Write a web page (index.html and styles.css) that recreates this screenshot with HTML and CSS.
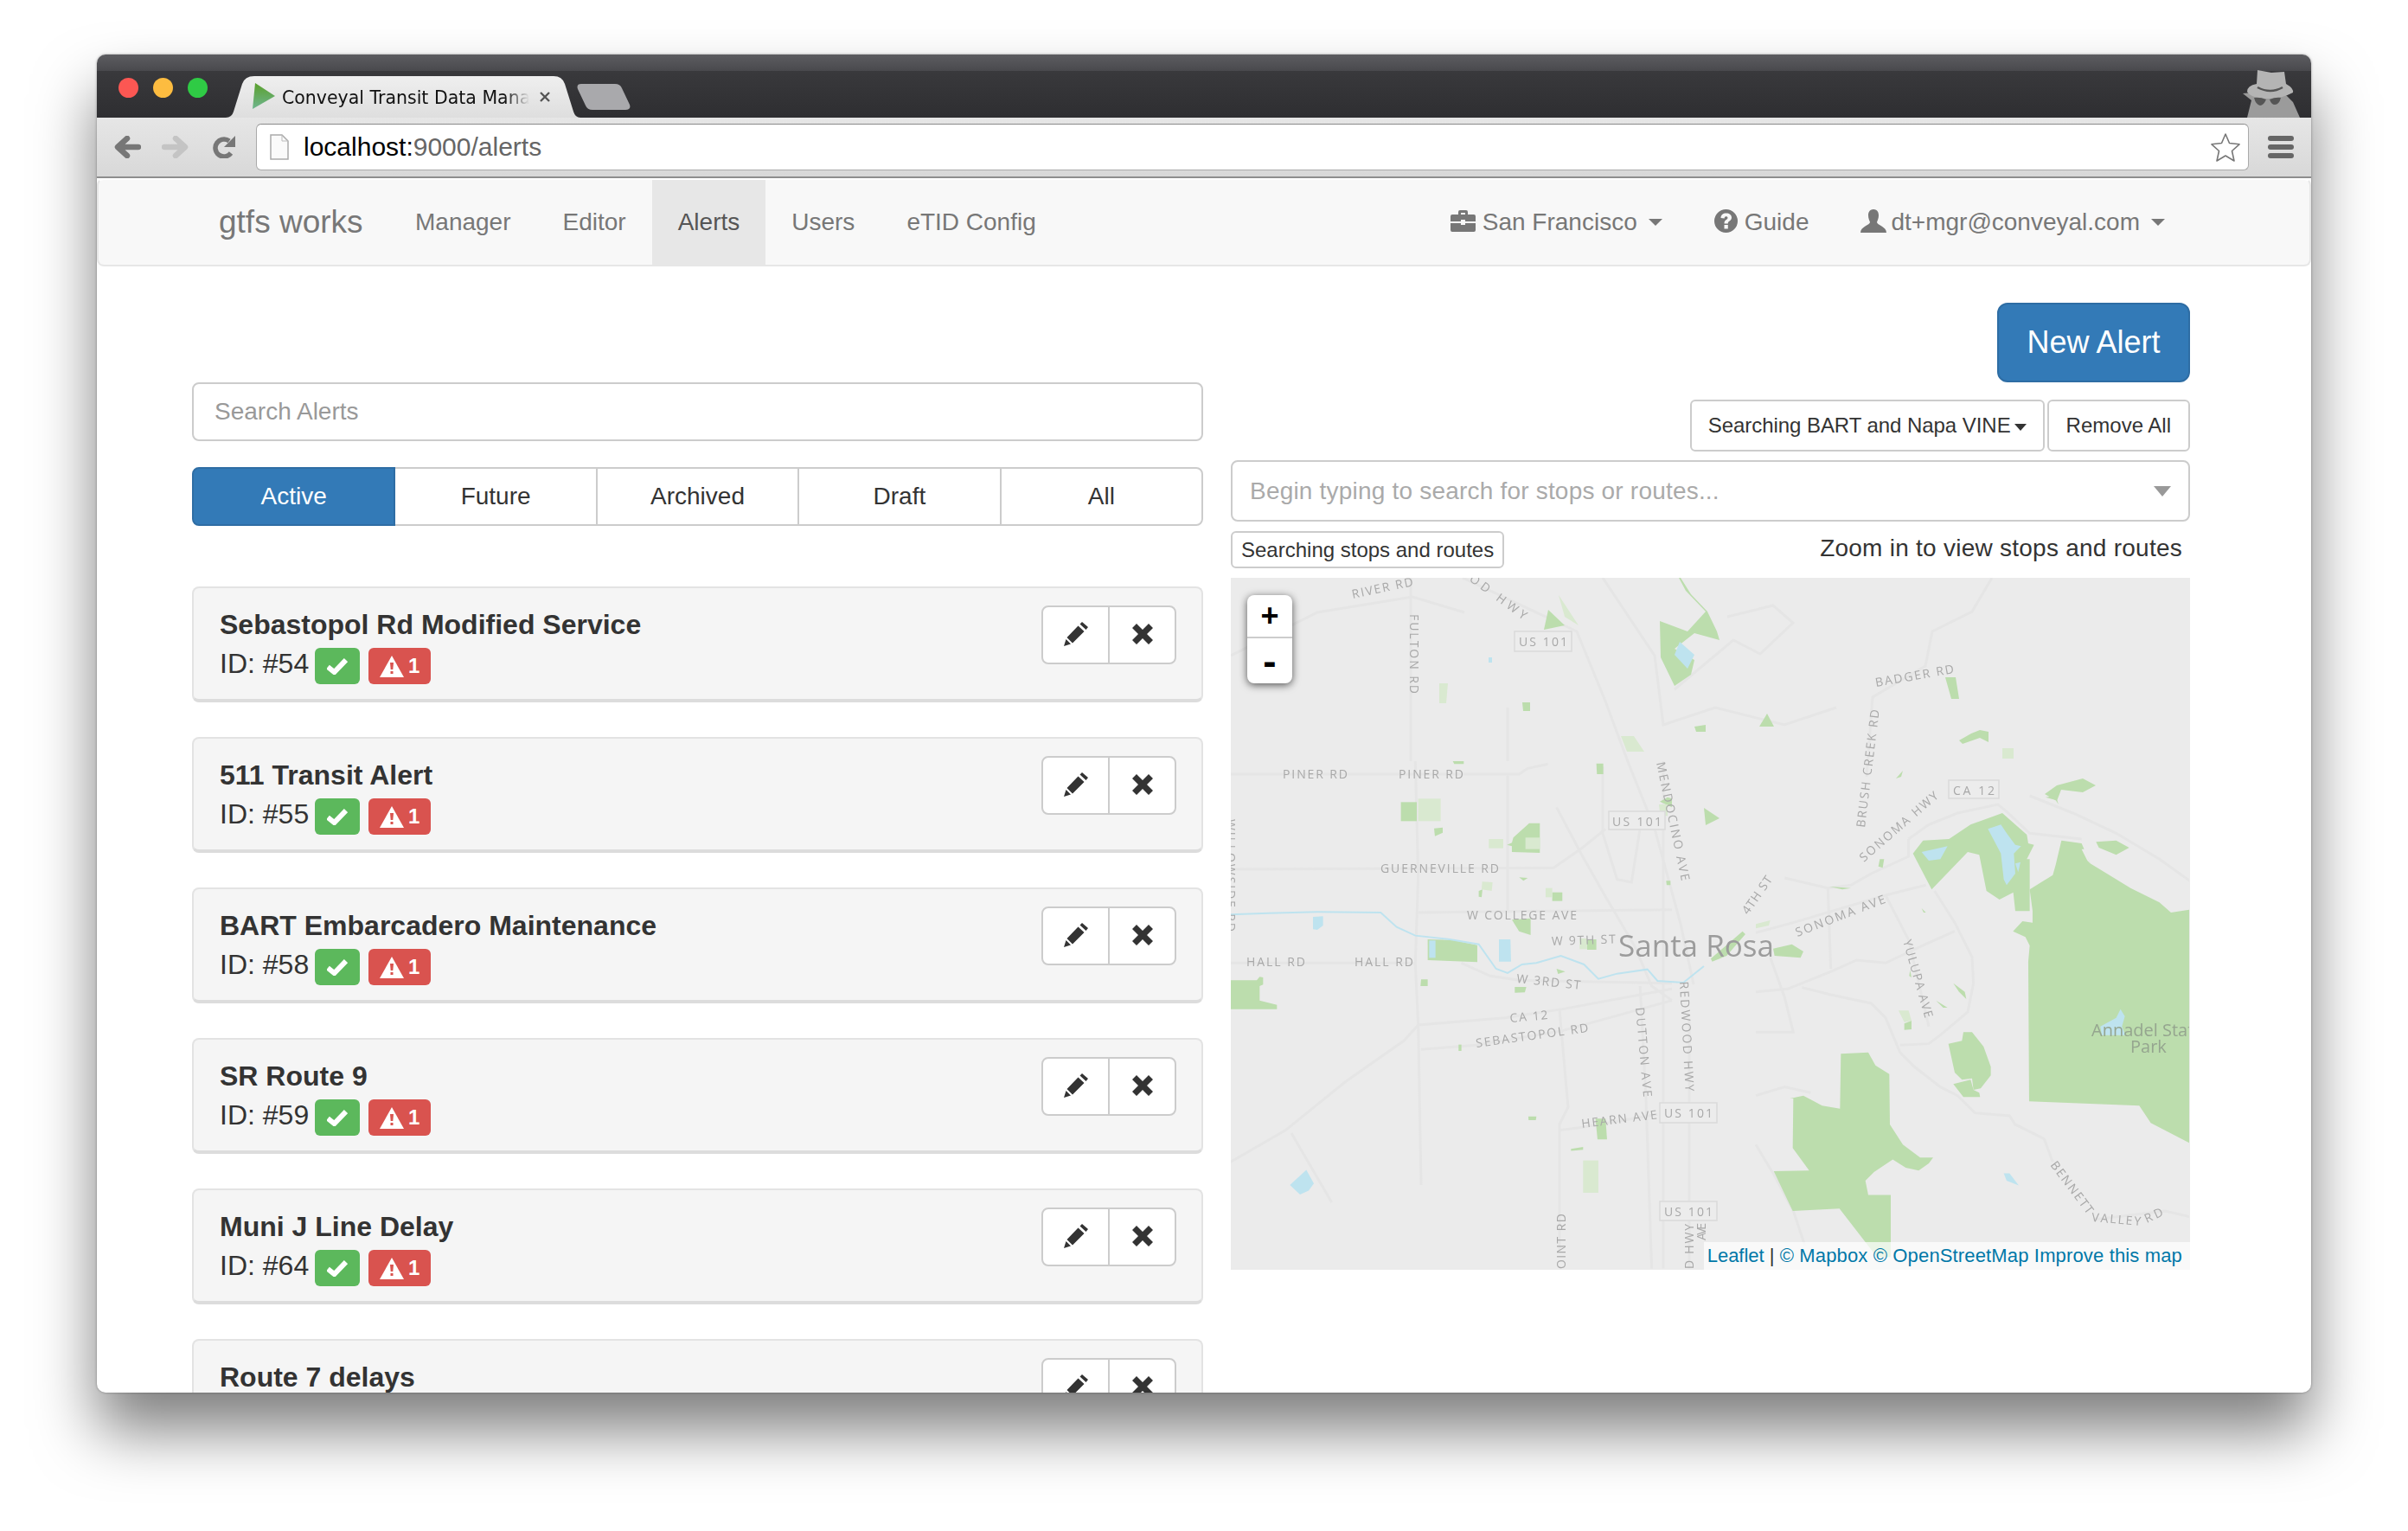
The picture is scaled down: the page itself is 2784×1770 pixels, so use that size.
FILE: index.html
```html
<!DOCTYPE html>
<html lang="en">
<head>
    <meta charset="UTF-8">
    <title>Conveyal Transit Data Manager</title>
    <link rel="stylesheet" href="styles.css">
</head>
<body>
    <svg class="defs" width="0" height="0">
        <symbol id="i-pencil" viewBox="0 0 28 28">
            <path d="M21 0L28 6L25.5 9L18.5 2.5Z M16.5 4.5L23.5 11L10 24.5L3.5 18Z M2.5 20L8 25.5L0 28Z"/>
        </symbol>
        <symbol id="i-remove" viewBox="0 0 24 24">
            <path d="M5 0L12 7L19 0L24 5L17 12L24 19L19 24L12 17L5 24L0 19L7 12L0 5Z"/>
        </symbol>
        <symbol id="i-check" viewBox="0 0 24 20">
            <path d="M1 11L8.5 17L22 3" fill="none" stroke="#fff" stroke-width="6"/>
        </symbol>
        <symbol id="i-warn" viewBox="0 0 28 25">
            <path d="M14 0L28 25L0 25Z" fill="#fff"/>
            <path d="M12 8H16L15.3 16H12.7Z M12.5 18H15.5V21H12.5Z" fill="#d9534f"/>
        </symbol>
    </svg>

    <div class="window">
        <!-- browser chrome -->
        <div class="titlebar">
            <div class="lights">
                <span class="light red"></span>
                <span class="light yellow"></span>
                <span class="light green"></span>
            </div>
            <div class="tab">
                <svg class="tab-shape" width="410" height="48" viewBox="0 0 410 48">
                    <defs>
                        <linearGradient id="tabfill" x1="0" y1="0" x2="0" y2="1">
                            <stop offset="0" stop-color="#efefef"/>
                            <stop offset="1" stop-color="#dedede"/>
                        </linearGradient>
                    </defs>
                    <path d="M0 48Q7 48 9 41L19 9Q22 0 33 0L379 0Q389 0 392 9L402 41Q404 48 410 48Z" fill="url(#tabfill)"/>
                </svg>
                <svg class="favicon" width="26" height="30" viewBox="0 0 26 30">
                    <defs>
                        <linearGradient id="favfill" x1="0" y1="0" x2="0" y2="1">
                            <stop offset="0" stop-color="#5aa02c"/>
                            <stop offset="1" stop-color="#6fb58f"/>
                        </linearGradient>
                    </defs>
                    <path d="M3 0L26 15L0 30Z" fill="url(#favfill)"/>
                </svg>
                <span class="tab-title">Conveyal Transit Data Manager</span>
                <svg class="tab-close" width="14" height="14" viewBox="0 0 14 14">
                    <path d="M2 2L12 12M12 2L2 12" stroke="#555" stroke-width="2.4"/>
                </svg>
            </div>
            <svg class="newtab" width="62" height="30" viewBox="0 0 62 30">
                <path d="M5 0L44 0Q50 0 52 5L61 24Q63 30 56 30L18 30Q12 30 10 25L1 6Q-1 0 5 0Z" fill="#a9a9ac"/>
            </svg>
            <svg class="spy" width="66" height="56" viewBox="0 0 66 56">
                <path d="M0 28L12 27Q30 38 48 28L58 38L66 56L5 56L10 36Z" fill="#9b9b9b"/>
                <path d="M17 1L33 4L48 3L50 17Q59 22 58 27Q45 34 30 34Q10 34 5 26Q5 19 16 17Z" fill="#b4b4b4"/>
                <path d="M13 33Q20 32 27 35Q24 42 20 42Q15 41 13 33ZM31 35Q38 32 44 33Q42 41 37 41Q33 41 31 35Z" fill="#555"/>
                <path d="M17 21Q32 29 46 21" fill="none" stroke="#555" stroke-width="2.5"/>
            </svg>
        </div>

        <div class="toolbar">
            <svg class="tool-back" width="31" height="26" viewBox="0 0 31 26">
                <path d="M28 13H5M15 3L4 13L15 23" fill="none" stroke="#777" stroke-width="6.5" stroke-linecap="round" stroke-linejoin="round"/>
            </svg>
            <svg class="tool-fwd" width="31" height="26" viewBox="0 0 31 26">
                <path d="M3 13H26M16 3L27 13L16 23" fill="none" stroke="#c4c4c4" stroke-width="6.5" stroke-linecap="round" stroke-linejoin="round"/>
            </svg>
            <svg class="tool-reload" width="28" height="26" viewBox="0 0 28 26">
                <path d="M22 20A10 10 0 1 1 20 6" fill="none" stroke="#777" stroke-width="5.5"/>
                <path d="M27 0V13H14Z" fill="#777"/>
            </svg>
            <div class="urlbar">
                <svg class="page-icon" width="22" height="30" viewBox="0 0 22 30">
                    <path d="M1 1H14L21 8V29H1Z" fill="#fafafa" stroke="#aaa" stroke-width="1.5"/>
                    <path d="M14 1V8H21" fill="none" stroke="#bbb" stroke-width="1"/>
                </svg>
                <span class="url-host">localhost:</span><span class="url-path">9000/alerts</span>
                <svg class="star" width="36" height="35" viewBox="0 0 36 35">
                    <path d="M18 2L22.5 12.5L34 13.8L25.5 21.5L28 33L18 27L8 33L10.5 21.5L2 13.8L13.5 12.5Z" fill="#fff" stroke="#777" stroke-width="1.6" stroke-linejoin="round"/>
                </svg>
            </div>
            <div class="menu-icon"><span></span><span></span><span></span></div>
        </div>

        <!-- app navbar -->
        <nav class="navbar">
            <a class="brand">gtfs works</a>
            <ul class="nav">
                <li>Manager</li>
                <li>Editor</li>
                <li class="active">Alerts</li>
                <li>Users</li>
                <li>eTID Config</li>
            </ul>
            <ul class="nav nav-right">
                <li>
                    <svg class="nav-icon" width="29" height="25" viewBox="0 0 29 25">
                        <path d="M9 5V2Q9 0 11 0H18Q20 0 20 2V5H17V3H12V5Z M0 7Q0 5 2 5H27Q29 5 29 7V13H17V11H12V13H0Z M0 15H12V17H17V15H29V23Q29 25 27 25H2Q0 25 0 23Z"/>
                    </svg>
                    San Francisco<span class="caret"></span>
                </li>
                <li>
                    <svg class="nav-icon" width="27" height="27" viewBox="0 0 27 27">
                        <path fill-rule="evenodd" d="M13.5 0A13.5 13.5 0 1 0 13.5 27A13.5 13.5 0 1 0 13.5 0Z M7.5 10C7.5 6.500 10 4.500 13.700 4.500C17.500 4.500 20 6.500 20 9.500C20 12 18.500 13 17 14C16 14.700 15.800 15.200 15.800 16.500H11.500C11.500 14 12.300 13 13.800 12C15 11.200 15.500 10.700 15.500 9.800C15.500 8.800 14.800 8.200 13.600 8.200C12.400 8.200 11.700 9 11.700 10.500Z M11.500 18H15.800V22.500H11.500Z"/>
                    </svg>
                    Guide
                </li>
                <li>
                    <svg class="nav-icon nav-icon-user" width="30" height="27" viewBox="0 0 30 27">
                        <path d="M15 0C20 0 21 4 21 7C21 11 19.500 13 19 15C19 18 30 20 30 27H0C0 20 11 18 11 15C10.500 13 9 11 9 7C9 4 10 0 15 0Z"/>
                    </svg>
                    dt+mgr@conveyal.com<span class="caret"></span>
                </li>
            </ul>
        </nav>

        <main class="page">
            <section class="col-left">
                <div class="search-box">Search Alerts</div>
                <div class="tabs">
                    <div class="tab-btn active">Active</div>
                    <div class="tab-btn">Future</div>
                    <div class="tab-btn">Archived</div>
                    <div class="tab-btn">Draft</div>
                    <div class="tab-btn">All</div>
                </div>

                <div class="alert-list">
                    <div class="alert-card">
                        <div class="alert-info">
                            <div class="alert-title">Sebastopol Rd Modified Service</div>
                            <div class="alert-meta">
                                <span class="alert-id">ID: #54</span>
                                <span class="badge ok"><svg width="24" height="20"><use href="#i-check"/></svg></span>
                                <span class="badge bad"><svg width="28" height="25"><use href="#i-warn"/></svg>1</span>
                            </div>
                        </div>
                        <div class="btn-pair">
                            <button><svg class="ic-pencil"><use href="#i-pencil"/></svg></button>
                            <button><svg class="ic-remove"><use href="#i-remove"/></svg></button>
                        </div>
                    </div>
                    <div class="alert-card">
                        <div class="alert-info">
                            <div class="alert-title">511 Transit Alert</div>
                            <div class="alert-meta">
                                <span class="alert-id">ID: #55</span>
                                <span class="badge ok"><svg width="24" height="20"><use href="#i-check"/></svg></span>
                                <span class="badge bad"><svg width="28" height="25"><use href="#i-warn"/></svg>1</span>
                            </div>
                        </div>
                        <div class="btn-pair">
                            <button><svg class="ic-pencil"><use href="#i-pencil"/></svg></button>
                            <button><svg class="ic-remove"><use href="#i-remove"/></svg></button>
                        </div>
                    </div>
                    <div class="alert-card">
                        <div class="alert-info">
                            <div class="alert-title">BART Embarcadero Maintenance</div>
                            <div class="alert-meta">
                                <span class="alert-id">ID: #58</span>
                                <span class="badge ok"><svg width="24" height="20"><use href="#i-check"/></svg></span>
                                <span class="badge bad"><svg width="28" height="25"><use href="#i-warn"/></svg>1</span>
                            </div>
                        </div>
                        <div class="btn-pair">
                            <button><svg class="ic-pencil"><use href="#i-pencil"/></svg></button>
                            <button><svg class="ic-remove"><use href="#i-remove"/></svg></button>
                        </div>
                    </div>
                    <div class="alert-card">
                        <div class="alert-info">
                            <div class="alert-title">SR Route 9</div>
                            <div class="alert-meta">
                                <span class="alert-id">ID: #59</span>
                                <span class="badge ok"><svg width="24" height="20"><use href="#i-check"/></svg></span>
                                <span class="badge bad"><svg width="28" height="25"><use href="#i-warn"/></svg>1</span>
                            </div>
                        </div>
                        <div class="btn-pair">
                            <button><svg class="ic-pencil"><use href="#i-pencil"/></svg></button>
                            <button><svg class="ic-remove"><use href="#i-remove"/></svg></button>
                        </div>
                    </div>
                    <div class="alert-card">
                        <div class="alert-info">
                            <div class="alert-title">Muni J Line Delay</div>
                            <div class="alert-meta">
                                <span class="alert-id">ID: #64</span>
                                <span class="badge ok"><svg width="24" height="20"><use href="#i-check"/></svg></span>
                                <span class="badge bad"><svg width="28" height="25"><use href="#i-warn"/></svg>1</span>
                            </div>
                        </div>
                        <div class="btn-pair">
                            <button><svg class="ic-pencil"><use href="#i-pencil"/></svg></button>
                            <button><svg class="ic-remove"><use href="#i-remove"/></svg></button>
                        </div>
                    </div>
                    <div class="alert-card">
                        <div class="alert-info">
                            <div class="alert-title">Route 7 delays</div>
                        </div>
                        <div class="btn-pair">
                            <button><svg class="ic-pencil"><use href="#i-pencil"/></svg></button>
                            <button><svg class="ic-remove"><use href="#i-remove"/></svg></button>
                        </div>
                    </div>
                </div>
            </section>

            <section class="col-right">
                <div class="row-end">
                    <button class="btn-new">New Alert</button>
                </div>
                <div class="row-end filter-row">
                    <button class="btn-sm btn-agency">Searching BART and Napa VINE<span class="caret dark"></span></button>
                    <button class="btn-sm">Remove All</button>
                </div>
                <div class="stop-select">
                    <span>Begin typing to search for stops or routes...</span>
                    <span class="select-arrow"></span>
                </div>
                <div class="map-head">
                    <button class="btn-xs">Searching stops and routes</button>
                    <span class="zoom-hint">Zoom in to view stops and routes</span>
                </div>

                <div class="map">
                    <svg class="map-art" width="1108" height="800" viewBox="0 0 1108 800">
                        <!-- roads, top part -->
                        <g class="roads">
                            <polyline points="268,0 400,62 432,140 460,215 490,290 520,400 535,470"/>
                            <polyline points="574,45 627,32 650,52 612,88 581,72 513,129"/>
                            <polyline points="880,0 857,39 811,62 803,102 742,138 735,230"/>
                            <polyline points="0,90 100,40 210,22 270,40"/>
                            <polyline points="208,0 208,212"/>
                            <polyline points="320,150 320,212"/>
                            <polyline points="430,0 490,90 500,170 560,150 640,170 700,150"/>
                        </g>
                        <!-- west half -->
                        <g transform="translate(0,212) scale(.3333)">
                            <g class="roads thick">
                                <polyline points="0,45 1000,45 1030,25 1100,10"/>
                                <polyline points="0,375 1120,370 1220,300 1300,235"/>
                                <polyline points="650,525 1530,515"/>
                                <polyline points="0,700 640,700"/>
                                <polyline points="800,700 900,745 1000,760 1530,770"/>
                                <polyline points="640,0 650,400 640,700 650,910 660,1470"/>
                                <polyline points="960,50 960,520"/>
                                <polyline points="0,1390 190,1280 400,1110 600,970 650,915 950,890 1150,860 1530,790"/>
                                <polyline points="660,1000 850,985 1150,935 1530,830"/>
                                <polyline points="1130,160 1220,330 1300,470 1400,640 1460,780 1530,830"/>
                                <polyline points="1140,860 1170,1200 1140,1260 1140,1700"/>
                                <polyline points="1140,1280 1220,1270 1480,1225"/>
                                <polyline points="1290,20 1290,250 1340,410 1390,420 1420,230"/>
                                <polyline points="1420,780 1440,1170 1460,1760"/>
                                <polyline points="1500,0 1500,1760"/>
                                <polyline points="1590,900 1590,1760"/>
                                <polyline points="210,1290 350,1530"/>
                            </g>
                            <g class="green">
                                <polygon points="590,142 645,142 645,208 590,208"/>
                                <polygon points="705,233 735,230 735,248 708,260"/>
                                <polygon points="770,0 808,0 808,10 775,10"/>
                                <polygon points="1268,8 1292,8 1292,45 1270,45"/>
                                <polygon points="980,265 1035,215 1072,215 1072,318 975,315 975,295 958,290 975,283"/>
                                <polygon points="1000,403 1030,405 1015,415"/>
                                <polygon points="860,450 873,445 870,472 860,470"/>
                                <polygon points="1115,455 1150,455 1150,485 1115,485"/>
                                <polygon points="975,550 1040,545 1040,603 1000,590"/>
                                <polygon points="1236,618 1268,618 1268,654 1236,654"/>
                                <polygon points="683,618 770,620 855,638 855,697 683,690"/>
                                <polygon points="660,757 683,757 683,780 658,780"/>
                                <polygon points="0,760 90,760 100,748 112,750 112,775 100,780 100,830 160,845 160,860 0,860"/>
                                <polygon points="985,783 1025,783 1020,802 985,803"/>
                                <polygon points="1130,720 1160,730 1135,738"/>
                                <polygon points="790,983 800,983 800,1005 790,1005"/>
                                <polygon points="1032,1232 1060,1232 1058,1245 1033,1245"/>
                                <polygon points="1265,1240 1300,1240 1305,1312 1272,1312"/>
                                <polygon points="1180,1345 1222,1338 1222,1348 1180,1352"/>
                                <polygon points="1488,140 1515,125 1530,130 1530,160"/>
                                <polygon points="1510,415 1525,415 1525,430 1512,430"/>
                                <polygon points="1665,685 1700,655 1775,590 1785,600 1720,675 1670,695"/>
                            </g>
                            <g class="green-light">
                                <polygon points="650,130 728,130 728,208 650,208"/>
                                <polygon points="1022,265 1072,265 1072,305 1022,305"/>
                                <polygon points="895,270 945,270 945,302 895,302"/>
                                <polygon points="872,418 908,420 905,450 870,445"/>
                                <polygon points="1092,440 1115,440 1115,472 1092,472"/>
                                <polygon points="1210,615 1236,615 1236,652 1210,652"/>
                                <polygon points="1222,1385 1275,1385 1275,1497 1222,1497"/>
                                <polygon points="1485,150 1515,150 1515,190 1490,190"/>
                            </g>
                            <g class="water">
                                <polygon points="688,622 710,622 710,682 688,682"/>
                                <polygon points="930,618 970,618 972,695 930,695"/>
                                <polygon points="285,540 320,538 320,570 300,585 285,583"/>
                                <polygon points="205,1470 262,1418 288,1465 270,1490 240,1503"/>
                            </g>
                            <polyline class="river" points="0,532 130,527 300,523 520,525 575,575 640,605 760,618 860,635 920,720 960,735 1010,705 1060,700 1145,675 1225,705 1275,755 1340,737 1445,722 1480,762 1570,768 1641,711"/>
                        </g>
                        <!-- east half -->
                        <g transform="translate(607,252) scale(.3333)">
                            <g class="roads thick">
                                <polyline points="0,475 130,440 450,345 590,310"/>
                                <polyline points="0,680 110,670 260,610 350,570 450,580 600,510 690,470"/>
                                <polyline points="620,330 690,440 750,560 755,650 735,750 640,830 600,860 500,865"/>
                                <polyline points="160,665 260,690 400,720 450,770 500,890 550,940 640,1010 700,1040 760,1100 880,1110 900,1140 1000,1190 1030,1270"/>
                                <polyline points="0,1210 60,1310 130,1440 170,1560"/>
                                <polyline points="530,150 600,100 700,60 840,30 870,55 950,130 1130,150"/>
                                <polyline points="950,0 1100,60 1250,130 1400,220 1505,295"/>
                                <polyline points="0,1040 100,1010 190,1030"/>
                                <polyline points="100,285 250,320 330,310 400,270 530,210 530,150"/>
                                <polyline points="250,320 260,600"/>
                                <polyline points="450,345 530,500 600,800"/>
                                <polyline points="1170,1470 1420,1440 1505,1460"/>
                                <polyline points="0,820 130,820 100,700 50,560"/>
                            </g>
                            <g class="green">
                                <polygon points="1060,155 1130,165 1160,235 1300,320 1400,370 1440,405 1505,395 1505,1205 1370,1135 1330,1075 948,1060 945,575 950,520 935,490 892,470 925,435 960,440 960,400 950,325 1030,275 1040,240"/>
                                <polygon points="545,200 580,155 670,150 745,100 855,60 940,135 945,165 965,170 940,220 950,220 950,400 900,400 893,335 845,360 800,330 775,205 735,195 610,325"/>
                                <polygon points="1180,160 1250,155 1295,180 1250,205 1190,180"/>
                                <polygon points="668,860 715,850 720,820 750,820 790,870 815,940 815,970 780,1015 755,1020 750,980 715,985 690,960"/>
                                <polygon points="685,1000 745,985 755,1020 775,1030 778,1045 720,1045"/>
                                <polygon points="295,895 390,890 415,935 463,965 465,1140 510,1210 570,1255 615,1255 600,1275 565,1300 520,1290 475,1262 410,1305 380,1335 390,1385 468,1385 468,1600 420,1600 290,1432 128,1440 62,1302 185,1300 128,1222 130,1050 118,1050 165,1040 230,1075 292,1085"/>
                                <polygon points="60,530 125,515 165,540 155,562 65,555"/>
                                <polygon points="430,220 445,220 440,250 425,245"/>
                                <polygon points="255,315 330,320 300,325"/>
                                <polygon points="575,390 590,405 582,405"/>
                                <polygon points="535,605 540,630 532,625"/>
                                <polygon points="685,650 725,680 730,705 705,680"/>
                                <polygon points="625,710 665,735 650,735"/>
                                <polygon points="515,790 540,780 540,810 515,812"/>
                                <polygon points="1005,5 1040,0 1050,30 1040,15"/>
                            </g>
                            <g class="green-light">
                                <polygon points="495,745 530,745 540,780 515,785"/>
                                <polygon points="0,445 50,432 45,450 0,460"/>
                            </g>
                            <polygon class="white-cut" points="1130,185 1142,185 1160,235 1150,225"/>
                            <g class="water">
                                <polygon points="805,115 850,100 870,130 900,170 920,175 895,200 900,270 870,310 860,290 850,200"/>
                                <polygon points="900,235 918,230 910,265"/>
                                <polygon points="575,195 665,175 640,220 600,225"/>
                                <polygon points="860,1310 880,1310 912,1352 870,1335"/>
                                <polygon points="1195,800 1250,770 1265,740 1280,765 1270,800 1282,830 1200,830"/>
                            </g>
                        </g>
                        <!-- north greens -->
                        <g class="green">
                            <polygon points="520,0 532,19 551,39 562,62 565,72 536,64 513,82 536,95 532,112 513,125 497,92 496,50 528,62 549,39 526,15 518,0"/>
                            <polygon points="367,37 386,55 362,60"/>
                            <polygon points="826,115 838,115 842,140 833,140"/>
                            <polygon points="337,144 346,144 346,154 338,154"/>
                            <polygon points="611,172 620,157 628,172"/>
                            <polygon points="536,172 549,170 549,178 538,178"/>
                            <polygon points="842,188 856,180 866,176 876,178 876,190 866,185 846,192"/>
                            <polygon points="769,232 777,223 775,230"/>
                            <polygon points="547,266 565,278 549,286"/>
                            <polygon points="941,250 955,240 985,232 1000,240 985,248 960,245 955,258"/>
                        </g>
                        <g class="green-light">
                            <polygon points="379,20 402,55 386,45"/>
                            <polygon points="241,122 251,122 249,145 241,145"/>
                            <polygon points="451,183 466,183 478,201 458,201"/>
                            <polygon points="892,197 905,197 905,209 892,209"/>
                        </g>
                        <g class="water">
                            <polygon points="519,74 536,89 528,105 513,89"/>
                            <polygon points="298,92 302,92 302,98 298,98"/>
                        </g>

                        <!-- highway shields -->
                        <g class="shield">
                            <rect x="328" y="62" width="66" height="23"/>
                            <rect x="437" y="270" width="65" height="21"/>
                            <rect x="830" y="234" width="58" height="21"/>
                            <rect x="496" y="607" width="66" height="23"/>
                            <rect x="496" y="721" width="66" height="22"/>
                        </g>
                        <g class="lbl">
                            <text x="333" y="79" textLength="56">US 101</text>
                            <text x="441" y="287" textLength="57">US 101</text>
                            <text x="835" y="251" textLength="48">CA 12</text>
                            <text x="501" y="624" textLength="56">US 101</text>
                            <text x="501" y="738" textLength="56">US 101</text>
                            <text transform="translate(141,24) rotate(-12)" textLength="72">RIVER RD</text>
                            <text transform="translate(275,3) rotate(36)" textLength="78">OD HWY</text>
                            <text transform="translate(207,42) rotate(90)" textLength="92">FULTON RD</text>
                            <text transform="translate(746,126) rotate(-10)" textLength="92">BADGER RD</text>
                            <text x="60" y="232" textLength="75">PINER RD</text>
                            <text x="194" y="232" textLength="75">PINER RD</text>
                            <text x="173" y="341" textLength="137">GUERNEVILLE RD</text>
                            <text x="273" y="395" textLength="127">W COLLEGE AVE</text>
                            <text transform="translate(371,425) rotate(-2)" textLength="74">W 9TH ST</text>
                            <text x="18" y="449" textLength="68">HALL RD</text>
                            <text x="143" y="449" textLength="68">HALL RD</text>
                            <text transform="translate(330,468) rotate(6)" textLength="74">W 3RD ST</text>
                            <text transform="translate(323,514) rotate(-5)" textLength="44">CA 12</text>
                            <text transform="translate(284,543) rotate(-8)" textLength="131">SEBASTOPOL RD</text>
                            <text transform="translate(468,497) rotate(85)" textLength="104">DUTTON AVE</text>
                            <text transform="translate(406,636) rotate(-7)" textLength="88">HEARN AVE</text>
                            <text transform="translate(-5,279) rotate(90)" textLength="130">WILLOWSIDE RD</text>
                            <text transform="translate(492,214) rotate(78)" textLength="140">MENDOCINO AVE</text>
                            <text transform="translate(733,289) rotate(-83)" textLength="137">BRUSH CREEK RD</text>
                            <text transform="translate(732,329) rotate(-41)" textLength="115">SONOMA HWY</text>
                            <text transform="translate(598,390) rotate(-55)" textLength="50">4TH ST</text>
                            <text transform="translate(655,415) rotate(-21)" textLength="110">SONOMA AVE</text>
                            <text transform="translate(777,420) rotate(74)" textLength="93">YULUPA AVE</text>
                            <text transform="translate(519,467) rotate(87)" textLength="127">REDWOOD HWY</text>
                            <text transform="translate(947,679) rotate(53)" textLength="72">BENNETT</text>
                            <text transform="translate(995,744) rotate(5)" textLength="57">VALLEY</text>
                            <text transform="translate(1059,746) rotate(-25)" textLength="22">RD</text>
                            <text transform="translate(535,799) rotate(-90)" textLength="52">D HWY</text>
                            <text transform="translate(549,766) rotate(-90)" textLength="20">AVE</text>
                            <text transform="translate(387,799) rotate(-90)" textLength="64">OINT RD</text>
                        </g>
                        <text class="city" x="448" y="438" textLength="180" lengthAdjust="spacingAndGlyphs">Santa Rosa</text>
                        <text class="park-name" x="995" y="530">Annadel State</text>
                        <text class="park-name" x="1040" y="549">Park</text>
                    </svg>

                    <div class="zoom-ctl">
                        <div class="zoom-btn zoom-in">+</div>
                        <div class="zoom-btn zoom-out">-</div>
                    </div>
                    <div class="attribution"><a>Leaflet</a> | <a class="attr-wide">© Mapbox © OpenStreetMap Improve this map</a></div>
                </div>
            </section>
        </main>
    </div>
</body>
</html>
```

FILE: styles.css
```css
* {
    box-sizing: border-box;
}
html, body {
    margin: 0;
    height: 1770px;
    overflow: hidden;
}
body {
    padding: 63px 0 0 112px;
    background: #fff;
    font-family: "Liberation Sans", Arial, sans-serif;
    font-size: 28px;
    color: #333;
}
.defs {
    position: absolute;
}
.window {
    width: 2560px;
    height: 1547px;
    border-radius: 10px;
    overflow: hidden;
    background: #fff;
    display: flex;
    flex-direction: column;
    box-shadow: 0 44px 70px rgba(0, 0, 0, 0.5), 0 0 3px rgba(0, 0, 0, 0.35);
}

/* browser chrome */
.titlebar {
    height: 73px;
    flex: none;
    position: relative;
    display: flex;
    align-items: flex-end;
    background: linear-gradient(#5d5d61 0, #49494d 19px, #39393c 19px, #2e2e31 100%);
}
.lights {
    display: flex;
    gap: 17px;
    align-self: flex-start;
    margin: 27px 0 0 25px;
}
.light {
    width: 23px;
    height: 23px;
    border-radius: 50%;
}
.light.red { background: #fc5753; }
.light.yellow { background: #fdbc40; }
.light.green { background: #2fcb45; }
.tab {
    position: relative;
    width: 410px;
    height: 48px;
    margin-left: 21px;
    display: flex;
    align-items: center;
    padding-left: 31px;
}
.tab-shape {
    position: absolute;
    left: 0;
    top: 0;
}
.favicon {
    position: relative;
    flex: none;
    margin-top: -2px;
}
.tab-title {
    position: relative;
    margin-left: 8px;
    width: 286px;
    padding-top: 2px;
    overflow: hidden;
    white-space: nowrap;
    font-family: "DejaVu Sans", sans-serif;
    font-size: 20.5px;
    color: #111;
    -webkit-mask-image: linear-gradient(to right, #000 90%, transparent 100%);
    mask-image: linear-gradient(to right, #000 90%, transparent 100%);
}
.tab-close {
    position: relative;
    margin-left: 11px;
    flex: none;
}
.newtab {
    margin: 0 0 9px -4px;
    flex: none;
}
.spy {
    margin-left: auto;
    margin-right: 13px;
    flex: none;
}
.toolbar {
    height: 70px;
    flex: none;
    display: flex;
    align-items: center;
    padding: 0 20px;
    background: linear-gradient(#e6e6e6, #d8d8d8);
    border-bottom: 2px solid #8e8e8e;
}
.tool-fwd { margin-left: 24px; }
.tool-reload { margin-left: 27px; }
.urlbar {
    width: 2304px;
    height: 54px;
    margin-left: 23px;
    display: flex;
    align-items: center;
    padding: 0 8px 0 15px;
    background: #fff;
    border: 1px solid #aaa;
    border-top-color: #8a8a8a;
    border-radius: 6px;
    font-size: 30px;
}
.page-icon {
    margin-right: 17px;
    flex: none;
}
.url-host { color: #000; }
.url-path { color: #666; }
.star {
    margin-left: auto;
}
.menu-icon {
    margin-left: 22px;
    display: flex;
    flex-direction: column;
    gap: 4px;
}
.menu-icon span {
    width: 30px;
    height: 6px;
    border-radius: 3px;
    background: #666;
}

/* app navbar */
.navbar {
    height: 102px;
    flex: none;
    display: flex;
    align-items: stretch;
    padding-left: 139px;
    padding-right: 137px;
    background: #f8f8f8;
    border: 2px solid #e7e7e7;
    border-top-color: #fff;
    border-radius: 8px;
    color: #777;
}
.brand {
    font-size: 37px;
    align-self: center;
    width: 197px;
    white-space: nowrap;
}
.nav {
    display: flex;
    margin: 0;
    padding: 0;
    list-style: none;
}
.nav li {
    display: flex;
    align-items: center;
    padding: 0 30px;
    white-space: nowrap;
}
.nav li.active {
    background: #e7e7e7;
    color: #555;
}
.nav-right {
    margin-left: auto;
}
.nav-icon {
    fill: #777;
    margin-right: 8px;
    margin-top: -4px;
    flex: none;
}
.nav-icon-user {
    margin-right: 5px;
}
.caret {
    display: inline-block;
    margin-left: 13px;
    border-top: 8px solid #777;
    border-left: 8px solid transparent;
    border-right: 8px solid transparent;
}
.caret.dark {
    margin-left: 4px;
    border-top-color: #333;
    border-width: 8px 7px 0;
    vertical-align: 2px;
}

/* page */
.page {
    flex: 1;
    min-height: 0;
    display: flex;
    gap: 32px;
    padding: 42px 140px 0 110px;
    overflow: hidden;
}
.col-left {
    width: 1169px;
    flex: none;
    padding-top: 92px;
}
.col-right {
    width: 1109px;
    flex: none;
}
.search-box {
    height: 68px;
    padding: 0 24px;
    display: flex;
    align-items: center;
    color: #999;
    border: 2px solid #ccc;
    border-radius: 8px;
}
.tabs {
    display: flex;
    margin-top: 30px;
    height: 68px;
}
.tab-btn {
    flex: 1;
    margin-left: -2px;
    display: flex;
    align-items: center;
    justify-content: center;
    background: #fff;
    border: 2px solid #ccc;
}
.tab-btn:first-child {
    margin-left: 0;
    border-radius: 8px 0 0 8px;
}
.tab-btn:last-child {
    border-radius: 0 8px 8px 0;
}
.tab-btn.active {
    position: relative;
    color: #fff;
    background: #337ab7;
    border-color: #2e6da4;
}
.alert-list {
    margin-top: 70px;
    display: flex;
    flex-direction: column;
    gap: 40px;
}
.alert-card {
    height: 134px;
    flex: none;
    display: flex;
    justify-content: space-between;
    padding: 20px 29px 16px 30px;
    background: #f5f5f5;
    border: 2px solid #e3e3e3;
    border-bottom-width: 4px;
    border-bottom-color: #dcdcdc;
    border-radius: 8px;
}
.alert-title {
    margin-top: 3px;
    font-size: 32px;
    line-height: 38px;
    font-weight: bold;
}
.alert-meta {
    display: flex;
    align-items: flex-start;
    margin-top: 8px;
}
.alert-id {
    font-size: 32px;
    line-height: 34px;
    margin: 1px 7px 0 0;
}
.badge {
    height: 42px;
    display: flex;
    align-items: center;
    justify-content: center;
    border-radius: 6px;
    color: #fff;
    font-size: 24px;
    font-weight: bold;
}
.badge.ok {
    width: 52px;
    background: #5cb85c;
}
.badge.bad {
    width: 72px;
    margin-left: 10px;
    gap: 5px;
    background: #d9534f;
}
.btn-pair {
    display: flex;
    height: 68px;
    flex: none;
}
.btn-pair button {
    width: 79px;
    display: flex;
    align-items: center;
    justify-content: center;
    padding: 0 0 3px;
    background: #fff;
    border: 2px solid #ccc;
    border-radius: 8px 0 0 8px;
}
.btn-pair button + button {
    margin-left: -2px;
    border-radius: 0 8px 8px 0;
}
.ic-pencil {
    width: 28px;
    height: 28px;
    fill: #333;
}
.ic-remove {
    width: 24px;
    height: 24px;
    fill: #333;
}

/* right column */
.row-end {
    display: flex;
    justify-content: flex-end;
}
.btn-new {
    width: 223px;
    height: 92px;
    padding: 0;
    color: #fff;
    font: 36px "Liberation Sans", Arial, sans-serif;
    background: #337ab7;
    border: 2px solid #2e6da4;
    border-radius: 12px;
}
.filter-row {
    margin-top: 20px;
    gap: 3px;
}
.btn-sm {
    height: 60px;
    padding: 0 20px;
    color: #333;
    font: 24px "Liberation Sans", Arial, sans-serif;
    background: #fff;
    border: 2px solid #ccc;
    border-radius: 6px;
}
.btn-agency {
    padding: 0 19px;
    letter-spacing: -0.05px;
}
.stop-select {
    height: 71px;
    margin-top: 10px;
    display: flex;
    align-items: center;
    justify-content: space-between;
    padding: 0 20px;
    color: #aaa;
    letter-spacing: 0.2px;
    border: 2px solid #ccc;
    border-radius: 8px;
}
.select-arrow {
    border-top: 12px solid #999;
    border-left: 10px solid transparent;
    border-right: 10px solid transparent;
}
.map-head {
    display: flex;
    justify-content: space-between;
    align-items: center;
    margin-top: 11px;
}
.btn-xs {
    height: 43px;
    padding: 0 10px;
    color: #333;
    font: 24px "Liberation Sans", Arial, sans-serif;
    background: #fff;
    border: 2px solid #ccc;
    border-radius: 6px;
}
.zoom-hint {
    margin-right: 9px;
    margin-top: -3px;
    color: #333;
    letter-spacing: 0.25px;
}
.map {
    position: relative;
    width: 1109px;
    height: 800px;
    margin-top: 11px;
    overflow: hidden;
    background: #ebebeb;
}
.map-art {
    display: block;
    filter: blur(0.6px);
}
.roads {
    fill: none;
    stroke: #e5e5e5;
    stroke-width: 3;
}
.roads.thick {
    stroke-width: 9;
}
.green { fill: #bcddad; }
.green-light { fill: #d9e9d0; }
.water { fill: #bee3ef; }
.white-cut { fill: #ebebeb; }
.river {
    fill: none;
    stroke: #bee3ef;
    stroke-width: 6;
}
.shield rect {
    fill: #ececec;
    stroke: #dadada;
    stroke-width: 1.5;
}
.lbl {
    font-family: "Open Sans", sans-serif;
    font-size: 14px;
    fill: #a8a8a8;
}
.city {
    font-family: "Open Sans", sans-serif;
    font-size: 35px;
    fill: #9c9c9c;
}
.park-name {
    font-family: "Open Sans", sans-serif;
    font-size: 20px;
    fill: #95a58f;
}
.zoom-ctl {
    position: absolute;
    left: 19px;
    top: 20px;
    width: 52px;
    background: #fff;
    border-radius: 8px;
    box-shadow: 0 2px 10px rgba(0, 0, 0, 0.65);
}
.zoom-btn {
    height: 52px;
    display: flex;
    align-items: center;
    justify-content: center;
    font: bold 36px "Liberation Sans", Arial, sans-serif;
    color: #000;
}
.zoom-in {
    border-bottom: 2px solid #ccc;
    height: 50px;
}
.zoom-out {
    font-size: 46px;
}
.attribution {
    position: absolute;
    right: 0;
    bottom: 0;
    height: 32px;
    padding: 0 9px 0 4px;
    display: flex;
    align-items: center;
    white-space: pre;
    font-size: 22px;
    color: #333;
    background: rgba(255, 255, 255, 0.7);
}
.attribution a {
    color: #0078a8;
}
.attr-wide {
    letter-spacing: 0.15px;
}
```
